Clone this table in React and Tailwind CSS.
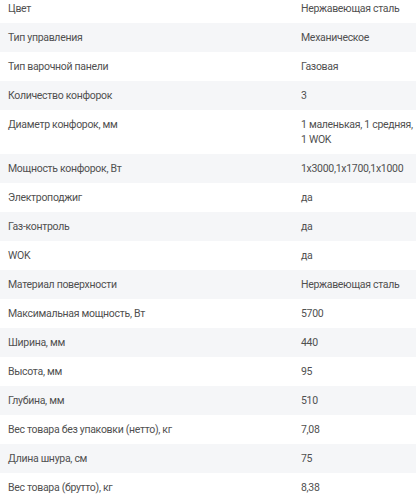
const specs = [
    ["Цвет", ["Нержавеющая сталь"]],
    ["Тип управления", ["Механическое"]],
    ["Тип варочной панели", ["Газовая"]],
    ["Количество конфорок", ["3"]],
    ["Диаметр конфорок, мм", ["1 маленькая, 1 средняя,", "1 WOK"]],
    ["Мощность конфорок, Вт", ["1x3000,1x1700,1x1000"]],
    ["Электроподжиг", ["да"]],
    ["Газ-контроль", ["да"]],
    ["WOK", ["да"]],
    ["Материал поверхности", ["Нержавеющая сталь"]],
    ["Максимальная мощность, Вт", ["5700"]],
    ["Ширина, мм", ["440"]],
    ["Высота, мм", ["95"]],
    ["Глубина, мм", ["510"]],
    ["Вес товара без упаковки (нетто), кг", ["7,08"]],
    ["Длина шнура, см", ["75"]],
    ["Вес товара (брутто), кг", ["8,38"]],
]

export default function App() {
    return (
        <div className="w-[416px] h-[499px] overflow-hidden bg-white font-['Roboto',sans-serif] text-[10.5px] leading-[15px] tracking-[-0.3px] text-[#505050]">
            {/* characteristics list */}
            <div className="-mt-[6px] flex flex-col">
                {specs.map(([name, lines], index) => (
                    <div
                        key={index}
                        className={`flex pl-2 py-[7px] ${index % 2 === 1 ? "bg-[#f5f6f8]" : "bg-white"}`}
                    >
                        <p className="flex-1 pr-4">{name}</p>
                        <div className="w-[115px] shrink-0 whitespace-nowrap">
                            {lines.map((line, i) => (
                                <p key={i}>{line}</p>
                            ))}
                        </div>
                    </div>
                ))}
            </div>
        </div>
    )
}
